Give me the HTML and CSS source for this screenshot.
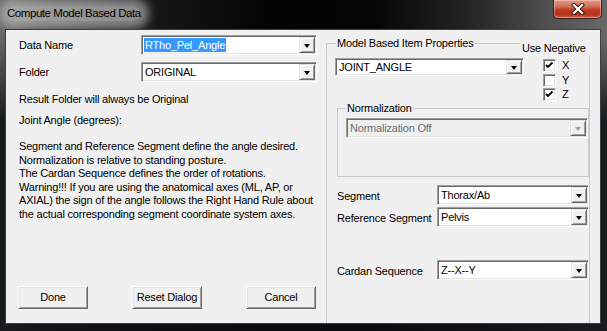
FILE: index.html
```html
<!DOCTYPE html>
<html>
<head>
<meta charset="utf-8">
<link rel="stylesheet" href="styles.css">
</head>
<body>
<div class="window">
  <div class="titlebar">
    <span class="title">Compute Model Based Data</span>
    <div class="close">
      <svg width="14" height="12" viewBox="0 0 14 12">
        <path d="M3 2 L11 10 M11 2 L3 10" stroke="#3a1a14" stroke-width="4.2" stroke-linecap="square"/>
        <path d="M3 2 L11 10 M11 2 L3 10" stroke="#ffffff" stroke-width="2.2" stroke-linecap="square"/>
      </svg>
    </div>
  </div>
  <div class="client">
    <div class="left">
      <div class="field">
        <span class="lbl">Data Name</span>
        <div class="combo wide"><span class="val"><span class="sel">RTho_Pel_Angle</span></span><span class="drop"><i class="tri"></i></span></div>
      </div>
      <div class="field second">
        <span class="lbl">Folder</span>
        <div class="combo wide"><span class="val">ORIGINAL</span><span class="drop"><i class="tri"></i></span></div>
      </div>
      <p class="note first">Result Folder will always be Original</p>
      <p class="note">Joint Angle (degrees):</p>
      <p class="desc">Segment and Reference Segment define the angle desired.<br>Normalization is relative to standing posture.<br>The Cardan Sequence defines the order of rotations.<br>Warning!!! If you are using the anatomical axes (ML, AP, or<br>AXIAL) the sign of the angle follows the Right Hand Rule about<br>the actual corresponding segment coordinate system axes.</p>
      <div class="buttons">
        <button class="btn">Done</button>
        <button class="btn">Reset Dialog</button>
        <button class="btn">Cancel</button>
      </div>
    </div>
    <fieldset class="group">
      <legend>Model Based Item Properties</legend>
      <span class="useneg">Use Negative</span>
      <div class="toprow">
        <div class="combo joint"><span class="val">JOINT_ANGLE</span><span class="drop"><i class="tri"></i></span></div>
        <div class="checks">
          <div class="chk"><span class="box"><svg width="11" height="11" viewBox="0 0 11 11"><path d="M2 5 L4 7 L8.5 2.5" fill="none" stroke="#000" stroke-width="1.9"/></svg></span>X</div>
          <div class="chk"><span class="box"></span>Y</div>
          <div class="chk"><span class="box"><svg width="11" height="11" viewBox="0 0 11 11"><path d="M2 5 L4 7 L8.5 2.5" fill="none" stroke="#000" stroke-width="1.9"/></svg></span>Z</div>
        </div>
      </div>
      <fieldset class="norm">
        <legend>Normalization</legend>
        <div class="combo disabled"><span class="val">Normalization Off</span><span class="drop"><i class="tri"></i></span></div>
      </fieldset>
      <div class="srow r-seg">
        <span class="slbl">Segment</span>
        <div class="combo seg"><span class="val">Thorax/Ab</span><span class="drop"><i class="tri"></i></span></div>
      </div>
      <div class="srow r-ref">
        <span class="slbl">Reference Segment</span>
        <div class="combo seg"><span class="val">Pelvis</span><span class="drop"><i class="tri"></i></span></div>
      </div>
      <div class="srow r-card">
        <span class="slbl">Cardan Sequence</span>
        <div class="combo seg"><span class="val">Z--X--Y</span><span class="drop"><i class="tri"></i></span></div>
      </div>
    </fieldset>
  </div>
</div>
</body>
</html>
```

FILE: styles.css
```css
* { box-sizing: border-box; }
html, body { margin: 0; padding: 0; }
body {
  width: 607px;
  height: 331px;
  overflow: hidden;
  font-family: "Liberation Sans", Arial, sans-serif;
  font-size: 11px;
  color: #000;
  background: #000;
}
.window {
  width: 607px;
  height: 331px;
  display: flex;
  flex-direction: column;
  background:
    linear-gradient(to bottom, rgba(0,0,0,0) 0, rgba(0,0,0,0) 40px, rgba(10,14,16,0.85) 120px),
    linear-gradient(to right, #666 0, #474747 6%, #1a1a1a 22%, #030303 45%, #060606 62%, #262626 78%, #4f4f4f 90%, #676767 100%);
}
.titlebar {
  height: 29px;
  display: flex;
  align-items: flex-start;
  flex: none;
}
.title {
  margin: 6px 0 0 7px;
  font-size: 11.5px;
  letter-spacing: -0.45px;
  line-height: 15px;
  color: #000;
  background: rgba(215,215,215,0.6);
  border-radius: 8px;
  box-shadow: 0 0 10px 8px rgba(215,215,215,0.55);
}
.close {
  margin-left: auto;
  margin-right: 5px;
  width: 49px;
  height: 19px;
  border: 1px solid #3b1d18;
  border-top: none;
  border-radius: 0 0 5px 5px;
  background: linear-gradient(to bottom, #e19a8a 0, #d4705b 35%, #c0391f 55%, #b8321c 80%, #d0604a 100%);
  box-shadow: inset 0 0 0 1px rgba(255,220,210,0.45);
  display: flex;
  align-items: center;
  justify-content: center;
}
.close svg { display: block; margin-top: -1px; }
.client {
  margin: 0 6px 0 5px;
  height: 295px;
  border: 1px solid #3c3f41;
  background: #f0f0f0;
  display: flex;
  overflow: hidden;
  flex: none;
  letter-spacing: -0.2px;
}
.left {
  width: 320px;
  flex: none;
  padding: 5px 0 0 13px;
  display: flex;
  flex-direction: column;
}
.field {
  display: flex;
  align-items: flex-start;
  height: 20px;
}
.field.second { margin-top: 7px; }
.lbl {
  width: 122px;
  line-height: 13px;
  margin-top: 4px;
}
.combo {
  display: flex;
  height: 20px;
  background: #fff;
  border: 1px solid;
  border-color: #a0a0a0 #ffffff #ffffff #a0a0a0;
  box-shadow: inset 1px 1px 0 #696969, inset -1px -1px 0 #e3e3e3;
  padding: 1px;
}
.combo .val {
  flex: 1;
  line-height: 15px;
  padding: 1px 0 0 2px;
  white-space: nowrap;
  overflow: hidden;
}
.combo .sel {
  background: #3399ff;
  color: #fff;
  padding: 1px 1px 1px 1px;
  margin-left: -1px;
}
.combo .drop {
  width: 16px;
  flex: none;
  background: #f0f0f0;
  border: 1px solid;
  border-color: #e3e3e3 #696969 #696969 #e3e3e3;
  box-shadow: inset 1px 1px 0 #ffffff, inset -1px -1px 0 #a0a0a0;
  display: flex;
  align-items: center;
  justify-content: center;
}
.tri {
  display: block;
  width: 0;
  height: 0;
  border-left: 3.5px solid transparent;
  border-right: 3.5px solid transparent;
  border-top: 4px solid #000;
  margin-top: 1px;
}
.combo.wide { width: 176px; }
.note {
  margin: 8px 0 0 0;
  line-height: 13px;
}
.note.first { margin-top: 11px; }
.desc {
  margin: 13px 0 0 0;
  line-height: 13.5px;
}
.buttons {
  display: flex;
  gap: 44px;
  margin: 65px 0 0 -1px;
}
.btn {
  width: 70px;
  height: 23px;
  font: inherit;
  letter-spacing: inherit;
  color: #000;
  background: #f0f0f0;
  border: 1px solid;
  border-color: #ffffff #696969 #696969 #ffffff;
  box-shadow: inset 1px 1px 0 #e3e3e3, inset -1px -1px 0 #a0a0a0;
  padding: 0;
  line-height: 13px;
}
.group {
  position: relative;
  width: 264px;
  height: 320px;
  margin: 7px 0 0 0;
  padding: 0;
  border: 1px solid #c5ccd0;
  flex: none;
  min-width: 0;
}
.group > legend {
  margin-left: 9px;
  padding: 0 1px;
  line-height: 13px;
}
.useneg {
  position: absolute;
  top: -8px;
  right: -2px;
  width: 71px;
  height: 13px;
  padding-left: 2px;
  line-height: 13px;
  background: #f0f0f0;
}
.toprow {
  display: flex;
  align-items: flex-start;
}
.combo.joint {
  width: 189px;
  height: 18px;
  margin: 8px 0 0 8px;
}
.combo.joint .val { line-height: 13px; }
.checks {
  margin: 9px 0 0 19px;
  display: flex;
  flex-direction: column;
  gap: 1.5px;
}
.chk {
  display: flex;
  align-items: center;
  height: 13px;
  line-height: 13px;
}
.box {
  width: 13px;
  height: 13px;
  margin-right: 6px;
  background: #fff;
  border: 1px solid;
  border-color: #a0a0a0 #ffffff #ffffff #a0a0a0;
  box-shadow: inset 1px 1px 0 #696969, inset -1px -1px 0 #e3e3e3;
  display: flex;
  align-items: center;
  justify-content: center;
}
.box svg { display: block; }
.norm {
  width: 252px;
  height: 75px;
  margin: 1px 0 0 10px;
  padding: 0;
  border: 1px solid #c5ccd0;
  min-width: 0;
}
.norm > legend {
  margin-left: 8px;
  padding: 0 1px;
  line-height: 13px;
}
.combo.disabled {
  width: 242px;
  margin: 3px 0 0 8px;
  background: #f0f0f0;
  color: #6d6d6d;
}
.combo.disabled .tri { border-top-color: #a0a0a0; }
.srow {
  display: flex;
  align-items: center;
  margin-left: 10px;
}
.r-seg { margin-top: 8px; }
.r-ref { margin-top: 2px; }
.r-card { margin-top: 33px; }
.slbl {
  width: 100px;
  line-height: 13px;
  padding-top: 2px;
  white-space: nowrap;
}
.combo.seg { width: 152px; }
```
